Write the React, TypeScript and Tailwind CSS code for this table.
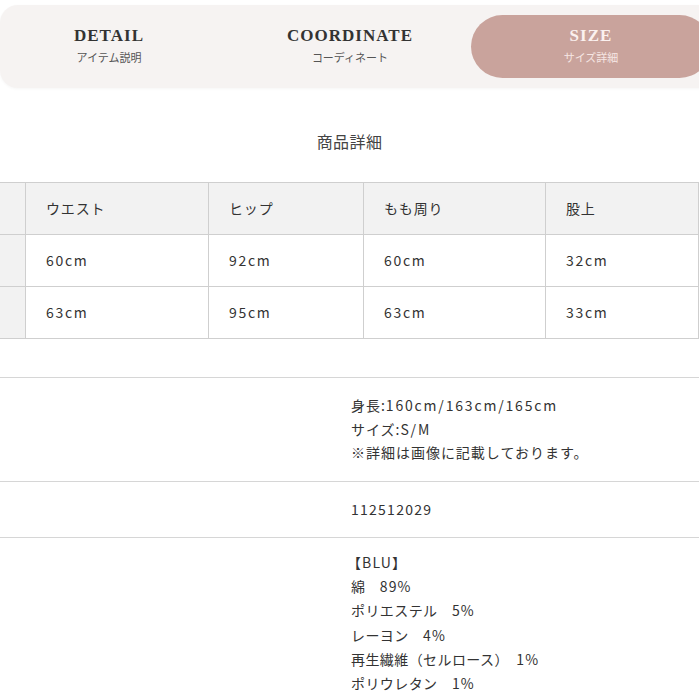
const tabs = [
  { en: 'DETAIL', ja: 'アイテム説明', active: false, pad: '' },
  { en: 'COORDINATE', ja: 'コーディネート', active: false, pad: 'pl-[11px]' },
  { en: 'SIZE', ja: 'サイズ詳細', active: true, pad: '' },
];

const heads = ['ウエスト', 'ヒップ', 'もも周り', '股上'];
const rows = [
  ['60cm', '92cm', '60cm', '32cm'],
  ['63cm', '95cm', '63cm', '33cm'],
];

const jp = { fontFamily: '"Noto Sans CJK JP", "Noto Sans", sans-serif' };
const serif = { fontFamily: '"Liberation Serif", "DejaVu Serif", serif' };

export default function App() {
  return (
    <div className="w-[699px] h-[699px] overflow-hidden bg-white text-[#333]" style={jp}>
      {/* Tabs */}
      <div className="pt-[5px] w-[721px]">
        <div className="grid grid-cols-[218px_253px_240px] h-[83px] pr-[10px] py-[10px] bg-[#f6f3f2] rounded-[18px] shadow-[0_1px_3px_rgba(0,0,0,0.04)]">
          {tabs.map((t) => (
            <div key={t.en} className={t.pad}>
              <div
                className={`h-full flex flex-col items-center justify-center pb-[4px] rounded-full ${t.active ? 'bg-[#c9a39c] text-[#fbf1ef]' : ''}`}
              >
                <span className="text-[17px] font-bold tracking-[0.06em] leading-[22px]" style={serif}>
                  {t.en}
                </span>
                <span className={`text-[11px] leading-[16px] mt-[2px] ${t.active ? 'text-[#f6e6e3]' : 'text-[#555]'}`}>
                  {t.ja}
                </span>
              </div>
            </div>
          ))}
        </div>
      </div>

      <h2 className="text-center text-[16px] leading-[24px] mt-[41px] tracking-wide text-[#444]">商品詳細</h2>

      {/* Size table */}
      <div className="mt-[29px] border-t border-[#cfcfcf] text-[14px] tracking-[0.04em]">
        <div className="grid grid-cols-[26px_183px_155px_182px_153px] h-[52px] bg-[#f2f2f2] border-b border-[#cfcfcf]">
          <div className="border-r border-[#cfcfcf]" />
          {heads.map((h) => (
            <div key={h} className="flex items-center px-5 border-r border-[#cfcfcf] tracking-[0.06em]">{h}</div>
          ))}
        </div>
        {rows.map((r, i) => (
          <div key={i} className="grid grid-cols-[26px_183px_155px_182px_153px] h-[52px] border-b border-[#cfcfcf]">
            <div className="bg-[#f2f2f2] border-r border-[#cfcfcf]" />
            {r.map((c, j) => (
              <div key={j} className="flex items-center px-5 border-r border-[#cfcfcf] tracking-[0.12em]">{c}</div>
            ))}
          </div>
        ))}
      </div>

      {/* Spec rows */}
      <div className="mt-[38px] border-t border-[#d6d6d6] text-[14px] leading-[23.5px] tracking-[0.07em]">
        <div className="grid grid-cols-[331px_1fr] border-b border-[#d6d6d6]">
          <div />
          <div className="px-5 py-4">
            <p>身長:<span className="tracking-[0.13em]">160cm/163cm/165cm</span></p>
            <p>サイズ:<span className="tracking-[0.13em]">S/M</span></p>
            <p>※詳細は画像に記載しております。</p>
          </div>
        </div>
        <div className="grid grid-cols-[331px_1fr] border-b border-[#d6d6d6]">
          <div />
          <div className="px-5 py-4">
            <p className="tracking-[0.09em]">112512029</p>
          </div>
        </div>
        <div className="grid grid-cols-[331px_1fr] leading-[24.2px] tracking-[0.03em]">
          <div />
          <div className="px-5 pt-[12px] whitespace-pre">
            <p className="-ml-[4px] tracking-[0.08em]">【BLU】</p>
            <p>綿　<span className="tracking-[0.08em]">89%</span></p>
            <p>ポリエステル　<span className="tracking-[0.08em]">5%</span></p>
            <p>レーヨン　<span className="tracking-[0.08em]">4%</span></p>
            <p>再生繊維（セルロース）　<span className="tracking-[0.08em]">1%</span></p>
            <p>ポリウレタン　<span className="tracking-[0.08em]">1%</span></p>
          </div>
        </div>
      </div>
    </div>
  );
}
